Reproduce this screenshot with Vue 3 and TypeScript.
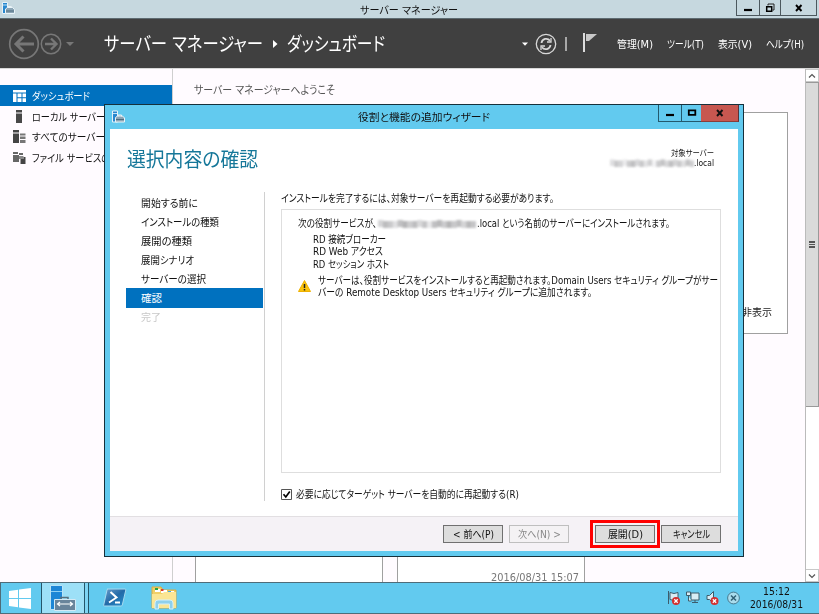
<script setup lang="ts">
import { defineComponent, h, onMounted, ref } from 'vue'

/* One line of text condensed or widened horizontally to a given width. */
const Fit = defineComponent({
  props: { w: { type: Number, required: true }, t: { type: String, required: true } },
  setup(props) {
    const inner = ref<HTMLElement | null>(null)
    const scale = ref(1)
    onMounted(() => {
      if (inner.value) scale.value = props.w / inner.value.getBoundingClientRect().width
    })
    return () =>
      h('span', { class: 'fit', style: { width: props.w + 'px' } }, [
        h('span', { ref: inner, class: 'fit-inner', style: { transform: `scaleX(${scale.value})` } }, props.t),
      ])
  },
})

interface Label { t: string; w: number }
interface SideItem extends Label { icon: string }

const side: SideItem[] = [
  { t: 'ダッシュボード', w: 58, icon: 'dash' },
  { t: 'ローカル サーバー', w: 73, icon: 'local' },
  { t: 'すべてのサーバー', w: 73, icon: 'all' },
  { t: 'ファイル サービスの', w: 78, icon: 'file' },
]
const menus: Label[] = [
  { t: '管理(M)', w: 36 },
  { t: 'ツール(T)', w: 37 },
  { t: '表示(V)', w: 34 },
  { t: 'ヘルプ(H)', w: 38 },
]
const steps: Label[] = [
  { t: '開始する前に', w: 57 },
  { t: 'インストールの種類', w: 78 },
  { t: '展開の種類', w: 51 },
  { t: '展開シナリオ', w: 53 },
  { t: 'サーバーの選択', w: 65 },
  { t: '確認', w: 21 },
  { t: '完了', w: 20 },
]
const roles: Label[] = [
  { t: 'RD 接続ブローカー', w: 73 },
  { t: 'RD Web アクセス', w: 70 },
  { t: 'RD セッション ホスト', w: 76 },
]
const shades = [190, 160, 175, 205, 165, 150, 180, 160, 195, 170, 215, 165, 155, 180, 150, 175, 160, 190, 155, 170]
</script>

<template>
  <div class="desktop">
    <svg class="defs" width="0" height="0">
      <defs>
        <symbol id="mgr" viewBox="0 0 13 12">
          <path d="M.5.5h5v11h-5z" fill="#2787cf" stroke="#e6f2f8" />
          <path d="M1 3h4" stroke="#bfe2f5" />
          <path d="M6 6V4.500h3.500V6M3.500 7l2-1.500h5l2 2v4h-9z" fill="#8ba5b5" stroke="#e8f3f8" />
          <path d="M4 9h8" stroke="#4c6c80" />
        </symbol>
      </defs>
    </svg>

    <main class="manager">
      <header class="titlebar">
        <svg class="appicon" width="13" height="12"><use href="#mgr" /></svg>
        <Fit class="wtitle" :w="98" t="サーバー マネージャー" />
        <div class="caption">
          <span class="cbtn c1"><svg width="10" height="10"><path d="M1 7h8" stroke="#000" stroke-width="2.200" /></svg></span>
          <span class="cbtn c2"><svg width="10" height="10"><path d="M3 2.500V1h6v6H7.500" fill="none" stroke="#222" /><path d="M1.700 3.700h5v4.600h-5z" fill="none" stroke="#000" stroke-width="1.500" /></svg></span>
          <span class="cbtn c3"><svg width="10" height="10"><path d="M2 2l5.500 6M7.500 2L2 8" stroke="#000" stroke-width="1.900" /></svg></span>
        </div>
      </header>

      <nav class="topbar">
        <svg class="navicons" width="68" height="34" fill="none" stroke="#777">
          <circle cx="16" cy="17" r="14.300" stroke-width="1.700" />
          <path d="M26 17H8M15.500 9.500L8 17l7.500 7.500" stroke-width="3" />
          <circle cx="43" cy="17" r="9.700" stroke-width="1.500" />
          <path d="M37 17h11M43 11.500l5.500 5.500-5.500 5.500" stroke-width="2.300" />
          <path d="M58 15h8l-4 4z" fill="#777" stroke="none" />
        </svg>
        <Fit class="crumb" :w="159" t="サーバー マネージャー" />
        <svg class="sep" width="5" height="8"><path d="M0 0l4.500 4L0 8z" fill="#fff" /></svg>
        <Fit class="crumb" :w="98" t="ダッシュボード" />
        <svg class="tools" width="77" height="34">
          <path d="M0 15.500h6l-3 3.200z" fill="#fff" />
          <g fill="none" stroke="#d8d8d8">
            <circle cx="24" cy="17" r="9.700" stroke-width="1.300" />
            <path d="M19.500 16a4.700 4.700 0 018.500-2.200M28.500 18a4.700 4.700 0 01-8.500 2.200" stroke-width="1.800" />
            <path d="M29 11v4h-4M19 23v-4h4" stroke-width="1.300" />
            <path d="M44 10v14" stroke="#bbb" stroke-width="1.700" />
          </g>
          <path d="M61 6h2v19h-2z" fill="#ddd" /><path d="M64 7h11l-8 7h-3z" fill="#c8c8c8" />
        </svg>
        <div class="menus"><Fit v-for="m in menus" :key="m.t" :w="m.w" :t="m.t" /></div>
      </nav>

      <div class="body">
        <aside class="side">
          <div v-for="(s, i) in side" :key="s.t" class="sitem" :class="{ on: i === 0 }">
            <svg width="14" height="14">
              <g v-if="s.icon === 'dash'" fill="#fff"><path d="M1 1h13v2.500H1zM1 4.500h3.500V13H1zM5.500 4.500h4v3.700h-4zM10.500 4.500H14v3.700h-3.500zM5.500 9.200h4V13h-4zM10.500 9.200H14V13h-3.500z" /></g>
              <g v-else-if="s.icon === 'local'" fill="#484848"><path d="M4 0h6v2.500H4zM4 3.500h6V13H4z" /></g>
              <g v-else-if="s.icon === 'all'"><path d="M1 0h6v2.500H1zM1 3.500h6V13H1z" fill="#444" /><path d="M8 3.500h5.500v2H8zM8 6.500h5.500v2.500H8zM8 10h5.500v3H8z" fill="#777" /></g>
              <g v-else><path d="M1 1h5v2H1zM1 4h6v7H1zM7 2h4v2H7z" fill="#666" /><path d="M8.500 6h5v7h-5z" fill="#444" /><path d="M7 5h4l1 1v2H7z" fill="#888" /></g>
            </svg>
            <Fit :w="s.w" :t="s.t" />
          </div>
        </aside>
        <section class="dash">
          <Fit class="welcome" :w="141" t="サーバー マネージャーへようこそ" />
          <div class="hero"><Fit :w="30" t="非表示" /></div>
          <div class="tiles">
            <div class="tile"></div>
            <div class="tile"><Fit :w="88" t="2016/08/31 15:07" /></div>
          </div>
        </section>
        <div class="scroll">
          <span class="sbtn"><svg width="8" height="6"><path d="M1 4.500l3-3 3 3" fill="none" stroke="#555" stroke-width="1.200" /></svg></span>
          <span class="thumb"><i></i><i></i><i></i></span>
          <span class="sbtn low"><svg width="8" height="6"><path d="M1 1.500l3 3 3-3" fill="none" stroke="#555" stroke-width="1.200" /></svg></span>
        </div>
      </div>
    </main>

    <section class="dialog">
      <header class="dtitle">
        <svg class="dicon" width="13" height="13"><use href="#mgr" /></svg>
        <Fit class="dname" :w="132" t="役割と機能の追加ウィザード" />
        <div class="dcap">
          <span class="cbtn d1"><svg width="10" height="10"><path d="M1 7h8" stroke="#000" stroke-width="2.200" /></svg></span>
          <span class="cbtn d2"><svg width="10" height="10"><path d="M1.800 2.300h6.500v4.500H1.800z" fill="none" stroke="#000" stroke-width="1.800" /></svg></span>
          <span class="cbtn d3"><svg width="10" height="10"><path d="M2 2l5.500 6M7.500 2L2 8" stroke="#111" stroke-width="1.900" /></svg></span>
        </div>
      </header>

      <div class="client">
        <div class="dhead">
          <h1><Fit :w="131" t="選択内容の確認" /></h1>
          <div class="target">
            <Fit :w="43" t="対象サーバー" />
            <div class="host">
              <svg class="smudge" width="84" height="8"><rect v-for="(s, i) in shades" :key="i" :x="i * 4.200" :y="i % 3 ? 1.500 : 0.500" width="4.600" height="6.500" :fill="`rgb(${s + 25},${s + 25},${s + 27})`" /></svg>
              <Fit :w="20" t=".local" />
            </div>
          </div>
        </div>

        <div class="cols">
          <ul class="steps">
            <li v-for="(s, i) in steps" :key="s.t" :class="{ on: i === 5, off: i === 6 }"><Fit :w="s.w" :t="s.t" /></li>
          </ul>
          <div class="pane">
            <Fit class="lead" :w="273" t="インストールを完了するには、対象サーバーを再起動する必要があります。" />
            <div class="box">
              <div class="row">
                <Fit :w="79" t="次の役割サービスが、" />
                <svg class="smudge" width="98" height="9"><rect v-for="(s, i) in shades" :key="i" :x="i * 4.900" :y="i % 4 ? 2 : 1" width="5.300" height="7" :fill="`rgb(${s + 12},${s + 12},${s + 14})`" /></svg>
                <Fit :w="193" t=".local という名前のサーバーにインストールされます。" />
              </div>
              <div class="roles"><Fit v-for="r in roles" :key="r.t" :w="r.w" :t="r.t" /></div>
              <div class="warn">
                <svg width="13" height="12"><path d="M6.500.5L12.500 11.500H.5z" fill="#fcc40a" stroke="#eeb100" stroke-linejoin="round" /><path d="M6.500 4v4M6.500 9v1.500" stroke="#222" stroke-width="1.500" /></svg>
                <div class="wtext">
                  <Fit :w="400" t="サーバーは、役割サービスをインストールすると再起動されます。Domain Users セキュリティ グループがサー" />
                  <Fit :w="274" t="バーの Remote Desktop Users セキュリティ グループに追加されます。" />
                </div>
              </div>
            </div>
            <label class="check">
              <svg width="11" height="11"><path d="M.5.5h10v10H.5z" fill="#fff" stroke="#555" /><path d="M2.500 5.300l2.300 2.700 4-5.500" fill="none" stroke="#000" stroke-width="1.700" /></svg>
              <Fit :w="223" t="必要に応じてターゲット サーバーを自動的に再起動する(R)" />
            </label>
          </div>
        </div>

        <footer class="foot">
          <button class="prev"><Fit :w="41" t="&lt; 前へ(P)" /></button>
          <button class="next" disabled><Fit :w="43" t="次へ(N) &gt;" /></button>
          <button class="deploy"><Fit :w="35" t="展開(D)" /></button>
          <button><Fit :w="37" t="キャンセル" /></button>
        </footer>
      </div>
    </section>

    <footer class="taskbar">
      <span class="start"><svg width="22" height="21" fill="#fff"><path d="M0 3l9-1.300V10H0zM10 1.500L22 0v10H10zM0 11h9v8.200L0 18zM10 11h12v10l-12-1.600z" /></svg></span>
      <span class="active">
        <svg width="26" height="26">
          <path d="M.5.5h12v24H.5z" fill="#1d86d6" stroke="#b8e3f7" /><path d="M1 6.500h11" stroke="#8fd0f3" />
          <path d="M11 15v-2.500h7V15" fill="none" stroke="#56707f" stroke-width="1.500" />
          <path d="M4.500 14.500h21v11h-21z" fill="#69849b" stroke="#d4eaf5" />
          <path d="M7.500 19h15M10 17l-2.500 2 2.500 2M20 17l2.500 2-2.500 2" fill="none" stroke="#fff" stroke-width="1.200" />
        </svg>
      </span>
      <span class="stack"></span>
      <svg class="ps" width="24" height="20">
        <defs><linearGradient id="psg" x2="1" y2="1"><stop stop-color="#6d9ecb" /><stop offset=".5" stop-color="#236aa8" /><stop offset="1" stop-color="#2491cf" /></linearGradient></defs>
        <path d="M4.500 1h17.500q1 0 .8 1l-3.500 15q-.3 1-1.300 1H1.500q-1 0-.8-1L4 2q.2-1 1-1z" fill="url(#psg)" stroke="#a7d9ee" />
        <path d="M7.500 4l6 5.500-7.500 5M12 14.500h5" fill="none" stroke="#fff" stroke-width="2" />
      </svg>
      <svg class="folder" width="26" height="24">
        <path d="M1 1h9l2 3h13v18H1z" fill="#f1cf68" stroke="#d7ae43" />
        <path d="M4 3h5v3H4z" fill="#fff" /><path d="M4 2h3v2H4z" fill="#24a348" /><path d="M10 4h6v3h-6z" fill="#fff" /><path d="M10 3h2.500v2H10z" fill="#e23b2e" /><path d="M17 5h6v3h-6z" fill="#fff" /><path d="M17 5h3v1.500h-3z" fill="#38a9e6" />
        <path d="M1 8h10l2-2h12v16H1z" fill="#fbe594" />
        <path d="M4 23v-6q0-3 3-3h12q3 0 3 3v6h-3.500v-5h-11v5z" fill="#8fd0ec" stroke="#d5f0fa" />
      </svg>
      <div class="tray">
        <svg width="74" height="18">
          <path d="M1.500 2v13M3 3.500l4 1 4-1v7l-4 1-4-1z" fill="#d8edf5" stroke="#3d5c6b" />
          <g fill="#d8edf5" stroke="#3d5c6b"><path d="M24 4h8v7h-8zM25 13.500h6M28 11v2" /><path d="M19.500 3h4v3.500h-4zM21.500 7v5h3" /></g>
          <path d="M40 6.500h2.500l4-4v12l-4-4H40z" fill="#d8edf5" stroke="#3d5c6b" />
          <g v-for="x in [9, 47.5]" :key="x"><circle :cx="x" cy="12" r="4" fill="#d32f2f" /><path :d="`M${x - 1.7} 10.300l3.400 3.400m0-3.400l-3.400 3.400`" stroke="#fff" stroke-width="1.300" /></g>
          <circle cx="66.500" cy="9" r="5.900" fill="#a9dced" stroke="#477b91" /><path d="M64 6.500l5 5m0-5l-5 5" stroke="#315f73" stroke-width="1.500" />
        </svg>
        <div class="clock"><Fit :w="27" t="15:12" /><Fit :w="53" t="2016/08/31" /></div>
      </div>
    </footer>
    <div class="marker"></div>
  </div>
</template>

<style>
body { margin: 0; overflow: hidden; }
.fit { display: inline-block; flex: none; white-space: nowrap; overflow: visible; }
.fit-inner { display: inline-block; transform-origin: 0 50%; font-feature-settings: "palt"; }
</style>

<style scoped>
.desktop { position: relative; width: 819px; height: 614px; overflow: hidden; font: 10.500px/12px "DejaVu Sans", "Noto Sans CJK JP", sans-serif; color: #111; background: #fffbff; }
.desktop * { box-sizing: border-box; }
svg { display: block; flex: none; }
.defs { position: absolute; }

.manager { display: flex; flex-direction: column; height: 582px; }
.titlebar { display: flex; height: 19px; background: #c6d8df; border-bottom: 1px solid #5d6b71; }
.appicon { margin: 2px 0 0 2px; }
.wtitle { margin: 4px 0 0 345px; }
.caption { display: flex; margin-left: auto; height: 16px; margin-right: 2px; }
.cbtn { display: flex; align-items: center; justify-content: center; border: solid #4c585e; border-width: 0 0 1px 1px; }
.c1 { width: 23px; } .c2 { width: 21px; } .c3 { width: 37px; border-right-width: 1px; }
.topbar { display: flex; align-items: center; height: 49px; background: #404040; color: #fff; }
.navicons { margin-left: 8px; }
.crumb { font-size: 19px; line-height: 28px; }
.topbar .crumb:nth-child(2) { margin-left: 28px; }
.sep { margin: 0 9px 0 10px; }
.tools { margin-left: 137px; }
.menus { display: flex; margin-left: 18px; gap: 14px; }

.body { display: flex; flex: 1; min-height: 0; border-top: 1px solid #d8d8d8; }
.side { width: 173px; padding-top: 16px; border-right: 1px solid #cfcfcf; overflow: hidden; }
.sitem { display: flex; align-items: center; gap: 6px; height: 20.700px; padding: 1px 0 0 12px; }
.on { background: #0071bf; color: #fff; }
.dash { display: flex; flex-direction: column; flex: 1; padding: 16px 0 0 22px; color: #555; }
.welcome { margin-left: -1px; font-size: 11px; }
.hero { display: flex; align-items: flex-end; justify-content: flex-end; width: 593px; height: 222px; margin-top: 15px; padding: 0 15px 15px 0; border: 1px solid #a0a0a0; background: #fff; color: #222; }
.tiles { display: flex; gap: 14px; flex: 1; }
.tile { display: flex; align-items: flex-end; justify-content: flex-end; width: 188px; border: solid #a0a0a0; border-width: 0 1px; background: #fff; padding: 0 5px 0 0; line-height: 9px; color: #777; }
.scroll { display: flex; flex-direction: column; width: 14px; background: #fff; border-left: 1px solid #bbb; }
.sbtn { display: flex; align-items: center; justify-content: center; height: 13px; border: 1px solid #c8c8c8; border-left: 0; }
.thumb { display: flex; flex-direction: column; align-items: center; justify-content: center; gap: 1px; height: 325px; border: 1px solid #999; border-left: 0; background: #dadada; }
.thumb i { width: 6px; height: 1.500px; background: #555; }
.low { margin-top: auto; }

.dialog { position: absolute; left: 104px; top: 104px; width: 640px; height: 453px; border: 1px solid #16303b; background: #62caef; padding: 0 5px 5px; }
.dtitle { display: flex; height: 24px; }
.dicon { margin: 5px 0 0 2px; }
.dname { margin: 6px 0 0 233px; color: #111; }
.dcap { display: flex; height: 17px; margin: 0 -1px 0 auto; }
.dcap .cbtn { border-color: #23596d; }
.d1 { width: 23px; } .d2 { width: 20px; } .dcap .d3 { width: 38px; background: #c75750; border-color: #8a3d3a; border-left-width: 0; border-right: 1px solid #57333a; }
.client { display: flex; flex-direction: column; height: 422px; background: #fff; }
.dhead { display: flex; justify-content: space-between; height: 63px; padding: 18px 24px 0 17px; }
h1 { margin: 0; font-size: 20px; font-weight: 400; line-height: 26px; color: #157799; }
.target { display: flex; flex-direction: column; align-items: flex-end; padding-top: 2px; font-size: 8.500px; line-height: 9.500px; }
.host { display: flex; align-items: center; }
.smudge { filter: blur(1px); opacity: .8; }
.cols { display: flex; flex: 1; min-height: 0; }
.steps { width: 139px; height: 309px; margin: 0 0 0 16px; padding: 1px 1px 0 0; border-right: 1px solid #d0d0d0; list-style: none; }
.steps li { display: flex; align-items: center; height: 19.100px; padding-left: 15px; }
.steps .off { color: #c8c8c8; }
.pane { display: flex; flex-direction: column; width: 440px; margin-left: 16px; }
.lead { line-height: 13px; }
.box { height: 264px; margin-top: 4px; padding: 7px 0 0 16px; border: 1px solid #dedede; }
.row { display: flex; align-items: center; gap: 1px; }
.roles { display: flex; flex-direction: column; padding: 4px 0 0 15px; line-height: 12.300px; }
.warn { display: flex; align-items: center; gap: 7px; padding-top: 4px; }
.wtext { display: flex; flex-direction: column; }
.check { display: flex; align-items: center; gap: 4px; height: 12px; margin-top: 15px; }
.foot { display: flex; height: 35px; padding: 8px 0 0 333px; border-top: 1px solid #e2dfe2; background: #f5f2f6; }
button { display: flex; align-items: center; justify-content: center; width: 60px; height: 18px; margin: 0 0 0 6px; padding: 0; border: 1px solid #707070; background: #dddddd; font: inherit; color: #111; }
.prev { margin-left: 0; }
.next { background: #f4f2f4; border-color: #bfbfbf; color: #888; }
.deploy { margin-left: 26px; }

.taskbar { position: relative; display: flex; align-items: center; height: 32px; background: #62caef; border: solid #4e6c79; border-width: 1px 0 1px 1px; }
.start { width: 40px; padding-left: 8px; }
.active { display: flex; align-items: center; height: 30px; width: 44px; padding-left: 8px; background: #9de0f7; border: solid #24566b; border-width: 0 1px; }
.stack { width: 4px; height: 30px; background: #7fd5f4; border-right: 1px solid #24566b; }
.ps { margin-left: 14px; }
.folder { margin-left: 24px; }
.tray { display: flex; align-items: center; margin-left: auto; padding-right: 16px; gap: 9px; }
.clock { display: flex; flex-direction: column; align-items: center; line-height: 13px; color: #111; }
.marker { position: absolute; left: 590px; top: 520px; width: 70px; height: 28px; border: 3px solid #f00; }
</style>
